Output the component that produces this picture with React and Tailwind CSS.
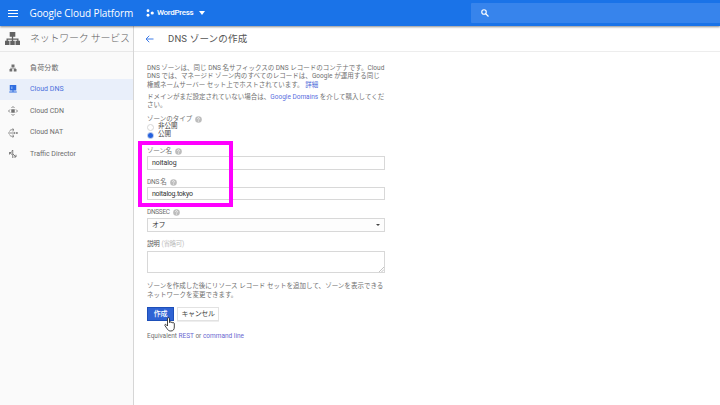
import React from 'react';

const Line = ({ h = 'h-[9px]', ls = '', children }) => (
  <div className={`flex items-center whitespace-pre ${h} ${ls}`}><span>{children}</span></div>
);

const Help = () => (
  <svg className="ml-[3px] h-[7px] w-[7px] shrink-0" viewBox="0 0 14 14">
    <circle cx="7" cy="7" r="6.6" fill="#bdbdbd" />
    <path d="M5 5.4a2 2 0 1 1 3 1.7c-.8.5-1 .8-1 1.6M7 9.8v1.4" fill="none" stroke="#fff" strokeWidth="1.4" />
  </svg>
);

const Label = ({ children, ls = '' }) => (
  <div className="flex h-[9px] items-center whitespace-pre text-[6.5px]">
    <span className={ls}>{children}</span>
    <Help />
  </div>
);

const Tree = ({ className }) => (
  <svg className={className} viewBox="0 0 16 16" fill="currentColor">
    <path d="M5 1h6v5H5zM0 10.500h4.800V15H0zM5.600 10.500h4.800V15H5.600zM11.200 10.500H16V15h-4.800zM7.300 6h1.400v2h5.700v3H13V9.300H8.700V11H7.300V9.300H3V11H1.600V8h5.700z" />
  </svg>
);

const SmallTree = ({ className }) => (
  <svg className={className} viewBox="0 0 16 16" fill="currentColor">
    <path d="M5 1h6v5H5zM1 10h5.500v5H1zM9.500 10H15v5H9.500zM7.200 6h1.600v1.500h4.200V11h-1.500V9h-7v2H3V7.500h4.200z" />
  </svg>
);

const Dns = ({ className }) => (
  <svg className={className} viewBox="0 0 16 16" fill="currentColor">
    <path d="M1.500 0h13v11h-13zM7 11h2v2h6.500v2H.5v-2H7z" />
    <path d="M4 3h3v5H4z" fill="#7ba4f0" />
  </svg>
);

const Cdn = ({ className }) => (
  <svg className={className} viewBox="0 0 20 20" fill="none" stroke="currentColor" strokeWidth="1.7">
    <path d="M7 4 10 1l3 3M7 16l3 3 3-3M4 7l-3 3 3 3M16 7l3 3-3 3" />
    <path d="M6.500 6.500h7v7h-7z" fill="currentColor" stroke="none" />
  </svg>
);

const Nat = ({ className }) => (
  <svg className={className} viewBox="0 0 20 20" fill="none" stroke="currentColor" strokeWidth="1.600">
    <path d="M0 10h14M3 7c1-3 3-3.500 5-3.500h3M9 .8l3 2.700-3 2.700M3 13c1 3 3 3.500 5 3.500h3M9 13.800l3 2.700-3 2.700M12 7.500l2.500 2.500-2.500 2.500" />
    <path d="M16 8.300h3.500v3.400h-3.500z" fill="currentColor" stroke="none" />
  </svg>
);

const Traffic = ({ className }) => (
  <svg className={className} viewBox="0 0 20 20" fill="none" stroke="currentColor" strokeWidth="1.800">
    <path d="M9.500 18V2M7 5l2.500-3M3 7l5 4M3 11V7h4M10 10l5.500 5.500M16 11.500v4.500h-4.500" />
  </svg>
);

const items = [
  { Icon: SmallTree, text: '負荷分散', ls: 'tracking-[0.15px]' },
  { Icon: Dns, text: 'Cloud DNS', active: true },
  { Icon: Cdn, text: 'Cloud CDN' },
  { Icon: Nat, text: 'Cloud NAT' },
  { Icon: Traffic, text: 'Traffic Director' },
];

export default function App() {
  return (
    <div className="relative flex h-[405px] w-[720px] flex-col overflow-hidden bg-white font-[Roboto,'Noto_Sans_CJK_JP',sans-serif] text-[#707070]">
      <header className="relative z-10 flex h-[26px] shrink-0 items-center bg-[#1a73e8] text-white shadow-[0_1px_2px_rgba(0,0,0,0.45)]">
        <div className="ml-2 flex w-[10px] flex-col gap-[2px]">
          <i className="h-px bg-white" />
          <i className="h-px bg-white" />
          <i className="h-px bg-white" />
        </div>
        <span className="ml-[11.500px] w-[104px] whitespace-nowrap font-['Open_Sans',sans-serif] text-[10px] tracking-[-0.09px]">Google Cloud Platform</span>
        <svg className="ml-[12.500px] h-2 w-2" viewBox="0 0 16 16" fill="white">
          <circle cx="4" cy="3.500" r="2.800" />
          <circle cx="12.500" cy="8" r="3.200" />
          <circle cx="4" cy="12.500" r="2.800" />
        </svg>
        <span className="ml-[3px] w-[37px] whitespace-nowrap text-[8px] font-medium tracking-[-0.3px]">WordPress</span>
        <i className="ml-[5px] border-x-[3.500px] border-t-[4px] border-x-transparent border-t-white" />
        <div className="ml-auto flex h-5 w-[249px] items-center rounded-l-[1px] bg-[#3784ec] pl-[10px]">
          <svg className="h-2 w-2" viewBox="0 0 16 16" fill="none" stroke="white" strokeWidth="2.300">
            <circle cx="6" cy="6" r="4.500" />
            <path d="m9.500 9.500 5.500 5.500" />
          </svg>
        </div>
      </header>

      <div className="flex min-h-0 flex-1">
        <aside className="flex w-[134px] shrink-0 flex-col border-r border-[#d6d6d6] bg-[#fafafa]">
          <div className="flex h-[26px] shrink-0 items-center border-b border-[#e8e8e8] pl-[5px]">
            <Tree className="h-[15px] w-[15px] text-[#626262]" />
            <span className="ml-[10px] whitespace-nowrap text-[10px] font-light tracking-[-0.24px] text-[#606060]">ネットワーク サービス</span>
          </div>
          <nav className="mt-[5px] flex flex-col">
            {items.map(({ Icon, text, active, ls = '' }) => (
              <div key={text} className={`flex h-[21.600px] items-center pl-[8px] ${active ? 'bg-[#e9effa] text-[#4b70dc]' : 'text-[#6c6c6c]'}`}>
                <Icon className={`${text === '負荷分散' || active ? 'mx-[1px] h-[8px] w-[8px]' : 'h-[10px] w-[10px]'} ${active ? 'text-[#2f6de0]' : 'text-[#707070]'}`} />
                <span className={`ml-3 whitespace-nowrap text-[7px] ${ls}`}>{text}</span>
              </div>
            ))}
          </nav>
        </aside>

        <main className="flex min-w-0 flex-1 flex-col">
          <div className="flex h-[26px] shrink-0 items-center border-b border-[#ededed] pl-[11px]">
            <svg className="mt-px h-2 w-[9px]" viewBox="0 0 18 16" fill="none" stroke="#3f7ce8" strokeWidth="2">
              <path d="M17 8H2M8.500 1.500 2 8l6.500 6.500" />
            </svg>
            <span className="ml-[14px] mt-px whitespace-nowrap text-[9.500px] tracking-[0.180px] text-[#555]">DNS ゾーンの作成</span>
          </div>

          <div className="ml-[13px] mt-[12px] flex w-[238px] flex-col text-[6.500px]">
            <Line>DNS ゾーンは、同じ DNS 名サフィックスの DNS レコードのコンテナです。Cloud</Line>
            <Line h="h-[8px]" ls="tracking-[0.02px]">DNS では、マネージド ゾーン内のすべてのレコードは、Google が運用する同じ</Line>
            <Line>権威ネームサーバー セット上でホストされています。 <span className="text-[#4a68d8]">詳細</span></Line>
            <div className="mt-[3px]">
              <Line>ドメインがまだ設定されていない場合は、<span className="text-[#5a6ede]">Google Domains</span> を介して購入してくだ</Line>
              <Line h="h-[8px]">さい。</Line>
            </div>

            <div className="mt-[5px]">
              <Label>ゾーンのタイプ</Label>
              <div className="flex h-[7px] items-center">
                <i className="h-[7px] w-[7px] rounded-full border border-[#d6d6d6]" />
                <span className="-mt-[2px] ml-1 text-[#444]">非公開</span>
              </div>
              <div className="flex h-[9px] items-center">
                <i className="flex h-[7px] w-[7px] items-center justify-center rounded-full border border-[#a9bce6]">
                  <b className="h-[5px] w-[5px] shrink-0 rounded-full bg-[#2460dd]" />
                </i>
                <span className="-mt-px ml-1 text-[#444]">公開</span>
              </div>
            </div>

            <div className="mt-[7px]">
              <Label ls="tracking-[-0.25px]">ゾーン名</Label>
              <div className="flex h-[14px] items-center border border-[#d8d8d8] pl-[4px] text-[7px] tracking-[-0.1px] text-[#333]">noitalog</div>
            </div>
            <div className="mt-[8px]">
              <Label ls="tracking-[-0.25px]">DNS 名</Label>
              <div className="flex h-[13px] items-center border border-[#d8d8d8] pl-[4px] pt-px text-[7px] tracking-[-0.25px] text-[#333]">noitalog.tokyo</div>
            </div>
            <div className="mt-[8px]">
              <Label ls="tracking-[-0.3px]">DNSSEC</Label>
              <div className="mt-[1px] flex h-[14px] items-center justify-between border border-[#d8d8d8] bg-[#fdfdfd] pl-[4px] pr-[4px] text-[7px] tracking-[-0.5px] text-[#333]">
                <span>オフ</span>
                <i className="border-x-2 border-t-2 border-x-transparent border-t-[#444]" />
              </div>
            </div>
            <div className="mt-[8px]">
              <Line h="h-[10px]" ls="tracking-[-0.28px]"><span className="text-[#555]">説明</span><span className="ml-[2px] text-[#bdbdbd]">(省略可)</span></Line>
              <div className="mt-[1px] flex h-[22px] items-end justify-end border border-[#d8d8d8]">
                <svg className="h-[5px] w-[5px]" viewBox="0 0 6 6" stroke="#999" strokeWidth=".7"><path d="M0 6 6 0M3 6l3-3" /></svg>
              </div>
            </div>

            <div className="mt-[9px]">
              <Line ls="tracking-[0.02px]">ゾーンを作成した後にリソース レコード セットを追加して、ゾーンを表示できる</Line>
              <Line>ネットワークを変更できます。</Line>
            </div>
            <div className="mt-[7px] flex gap-[3px] text-[7px]">
              <div className="flex h-[14px] w-[27px] items-center justify-center border border-[#1d4fb8] bg-[#2f63d4] font-medium tracking-[-0.2px] text-white">作成</div>
              <div className="flex h-[14px] w-[42px] items-center justify-center whitespace-nowrap border border-[#e2e2e2] tracking-[-0.35px] text-[#444] shadow-[0_1px_0_#eee]">キャンセル</div>
            </div>
            <div className="mt-[11px]">
              <Line>Equivalent <span className="text-[#6a67d0]">REST</span> or <span className="text-[#6a67d0]">command line</span></Line>
            </div>
          </div>
        </main>
      </div>

      <div className="absolute left-[138px] top-[141px] h-[66px] w-[95px] border-4 border-[#ff00ff]" />
      <svg className="absolute left-[164px] top-[317px] h-[15px] w-[11px]" viewBox="0 0 22 30" fill="white" stroke="#222" strokeWidth="1.700" strokeLinejoin="round">
        <path d="M7 18V3.500C7 .5 11 .5 11 3.500V11c0-2 3.400-2 3.400.5 0-2 3.200-1.500 3.200.8 0-1.600 3-1.300 3 .9V20c0 5-2 8-7 8-4 0-6-2-8-5.500L2 17.500c-1.500-2.500 1.200-3.700 2.600-2z" />
      </svg>
    </div>
  );
}
